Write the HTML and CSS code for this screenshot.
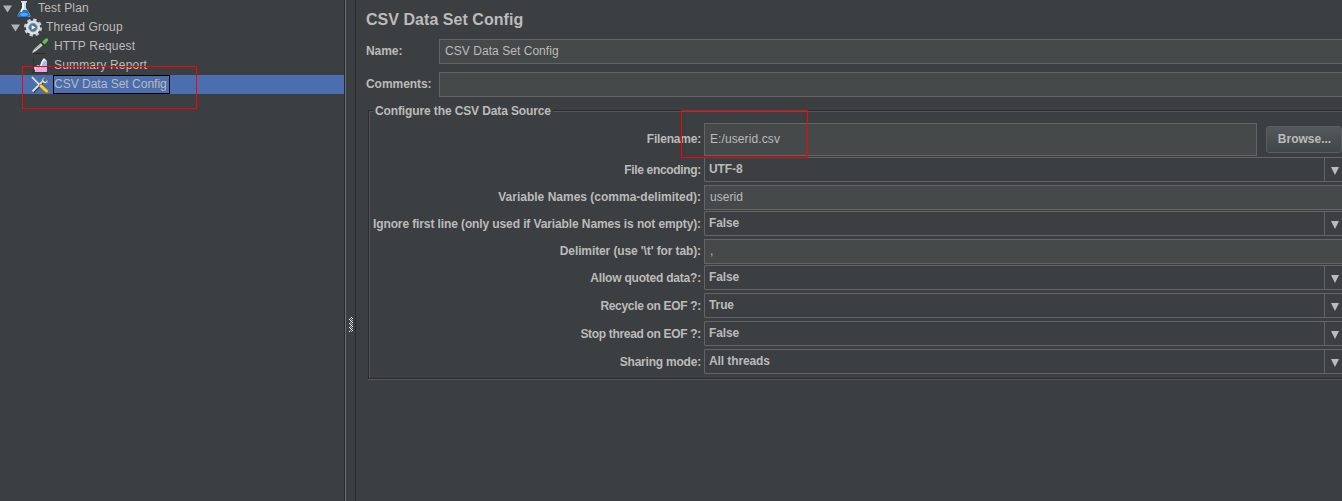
FILE: index.html
```html
<!DOCTYPE html>
<html lang="en">
<head>
<meta charset="utf-8">
<title>CSV Data Set Config</title>
<link rel="stylesheet" href="styles.css">
</head>
<body>
<div class="app">
  <nav class="tree">
    <div class="node level-0">
      <svg class="toggle" viewBox="0 0 10 8"><path d="M0 0H10L5 8Z" fill="#b0b2b3"/></svg>
      <svg class="icon" viewBox="0 0 20 19"><path d="M8 3V9L4 15.5Q3 18 5 18H15Q17 18 16 15.5L12 9V3Z" fill="#c6d9e8"/><path d="M7 2.8H13" stroke="#dce9f3" stroke-width="1.5"/><path d="M7 11H13L16 16Q16 18 14 18H5Q3 18 4 16Z" fill="#1a73d6"/><path d="M9 4V9L7 13" stroke="#fff" stroke-width="1.6" fill="none"/><ellipse cx="10" cy="15.5" rx="4" ry="1.7" fill="#4ba8f5"/></svg>
      <span class="label">Test Plan</span>
    </div>
    <div class="node level-1">
      <svg class="toggle" viewBox="0 0 10 8"><path d="M0 0H10L5 8Z" fill="#b0b2b3"/></svg>
      <svg class="icon" viewBox="0 0 20 19"><circle cx="10" cy="9.5" r="7.8" fill="none" stroke="#c9cfd5" stroke-width="2.4" stroke-dasharray="3.4 2.73"/><circle cx="10" cy="9.5" r="7.1" fill="#dfe3e6"/><circle cx="10" cy="9.5" r="4.2" fill="#4674a5" stroke="#8496a9"/><path d="M8.7 7.2L12.5 9.5L8.7 11.8Z" fill="#fff"/></svg>
      <span class="label">Thread Group</span>
    </div>
    <div class="node level-2">
      <svg class="icon" viewBox="0 0 20 19"><path d="M3 16.5H16" stroke="#292b2c"/><path d="M2 16L4 12.5L12 5L14 7L6 14Z" fill="#e9eeee" stroke="#899294" stroke-width=".6"/><path d="M5 13L11.5 7" stroke="#7d8586" stroke-width=".8"/><path d="M10.5 4.5L14.5 8.5" stroke="#1d3d1b" stroke-width="2"/><path d="M12 5L15 2Q17 .5 18 2Q19 3 17 5L14.5 7.5Z" fill="#69ba4b"/></svg>
      <span class="label">HTTP Request</span>
    </div>
    <div class="node level-2">
      <svg class="icon" viewBox="0 0 20 19"><path d="M3.5 2V17M2 16.5H18" fill="none" stroke="#303335"/><path d="M5 16V12L8 9.5L10 10L12 5L14 3L17 5V16Z" fill="#a9b9ec"/><path d="M5 16V13L8 10.5L10 12L13 10L17 14V16Z" fill="#f0a4df"/><path d="M5 13.5V11.5L8 10L10.5 11L12 6L14 3L16 5" fill="none" stroke="#fafaff" stroke-width="1.4"/></svg>
      <span class="label">Summary Report</span>
    </div>
    <div class="node level-2 selected">
      <svg class="icon" viewBox="0 0 20 19"><path d="M3 17L12.5 7.5" stroke="#222d39" stroke-width="3"/><path d="M2.5 16.5L12.5 6.5" stroke="#e2e3df" stroke-width="2"/><path d="M16.5 2L13.5 4L14 6L16 6.5L18 4Q18.5 8 15.5 8.5Q11.5 8.5 11.5 5.5Q12 2 16.5 2Z" fill="#dfe0dc" stroke="#49505b" stroke-width=".5"/><path d="M2 2L10.5 11" stroke="#e7e3d8" stroke-width="1.8"/><path d="M11 11L17 16.5" stroke="#9c7420" stroke-width="4.2" stroke-linecap="round"/><path d="M11 11L16.5 16" stroke="#f6cf3e" stroke-width="2.8" stroke-linecap="round"/></svg>
      <span class="label">CSV Data Set Config</span>
    </div>
  </nav>
  <div class="divider">
    <svg class="grip" viewBox="0 0 4 15" shape-rendering="crispEdges"><defs><pattern id="dots" width="4" height="4" patternUnits="userSpaceOnUse"><path d="M2 0h1v1h-1zM3 1h1v1h-1zM0 2h1v1h-1zM1 3h1v1h-1z" fill="#fff"/><path d="M1 1h1v1h-1zM2 2h1v1h-1zM3 3h1v1h-1z" fill="#a5a7a8"/></pattern></defs><rect width="4" height="15" fill="url(#dots)"/></svg>
  </div>
  <main class="panel">
    <h1 class="title">CSV Data Set Config</h1>
    <div class="property"><label class="name">Name:</label><div class="field">CSV Data Set Config</div></div>
    <div class="property"><label class="name">Comments:</label><div class="field"></div></div>
    <section class="group">
      <h2 class="legend">Configure the CSV Data Source</h2>
      <div class="row file"><label class="caption snug">Filename:</label><div class="field">E:/userid.csv</div><button class="browse">Browse...</button></div>
      <div class="row gap-1"><label class="caption tight low">File encoding:</label><div class="combo"><span class="value">UTF-8</span><span class="arrow"></span></div></div>
      <div class="row gap-3"><label class="caption">Variable Names (comma-delimited):</label><div class="field">userid</div></div>
      <div class="row gap-1"><label class="caption close low">Ignore first line (only used if Variable Names is not empty):</label><div class="combo"><span class="value">False</span><span class="arrow"></span></div></div>
      <div class="row gap-3"><label class="caption close">Delimiter (use '\t' for tab):</label><div class="field">,</div></div>
      <div class="row gap-1"><label class="caption snug low">Allow quoted data?:</label><div class="combo"><span class="value">False</span><span class="arrow"></span></div></div>
      <div class="row gap-3"><label class="caption tight low">Recycle on EOF ?:</label><div class="combo"><span class="value">True</span><span class="arrow"></span></div></div>
      <div class="row gap-3"><label class="caption tight low">Stop thread on EOF ?:</label><div class="combo"><span class="value">False</span><span class="arrow"></span></div></div>
      <div class="row gap-3"><label class="caption snug low">Sharing mode:</label><div class="combo"><span class="value">All threads</span><span class="arrow"></span></div></div>
    </section>
  </main>
  <div class="mark mark-tree"></div>
  <div class="mark mark-file"></div>
</div>
</body>
</html>
```
FILE: styles.css
```css
* { box-sizing: border-box; }
body { margin: 0; background: #3c3f41; color: #bbb; font: 12px/15px "Liberation Sans", Arial, sans-serif; overflow: hidden; }
.app { position: relative; display: flex; width: 1342px; height: 501px; overflow: hidden; }
.tree { width: 344px; margin-top: -1px; flex: none; }
.node { display: flex; align-items: center; height: 19px; }
.level-0 { padding-left: 3px; }
.level-1 { padding-left: 11px; }
.level-2 { padding-left: 30px; }
.toggle { width: 9px; height: 8px; margin-right: 3px; flex: none; }
.icon { width: 20px; height: 19px; margin-right: 3px; flex: none; }
.level-0 .toggle { margin-right: 2px; }
.level-1 .icon { margin-right: 2px; }
.label { height: 19px; line-height: 17px; padding: 1px; letter-spacing: .17px; white-space: nowrap; }
.selected { background: #4b6eaf; }
.selected .label { width: 117px; border: 1px solid #000; padding: 0; letter-spacing: 0; }
.divider { display: flex; align-items: center; width: 12px; padding: 148px 0 0 4px; border-left: 1px solid #282a2b; border-right: 1px solid #282a2b; box-shadow: inset 1px 0 #6a6d6f; flex: none; }
.grip { width: 4px; height: 15px; }
.panel { flex: 1; min-width: 0; padding: 10px 0 0 10px; }
.title { margin: 0 0 10px; font-size: 16px; line-height: 19px; font-weight: bold; letter-spacing: .04px; }
.property { display: flex; align-items: center; height: 25px; margin-bottom: 8px; }
.name { width: 73px; font-weight: bold; letter-spacing: -.05px; flex: none; }
.field { height: 25px; flex: 1; padding: 0 5px; line-height: 22px; border: 1px solid #646464; border-right: 0; background: #45494a; letter-spacing: .05px; }
.group { position: relative; height: 269px; margin: 13px 0 0 2px; padding: 12px 0 0 2px; border: 1px solid #282a2b; border-right: 0; box-shadow: inset 1px 1px #555759, 0 1px #555759; }
.legend { position: absolute; left: 4px; top: -7px; margin: 0; padding: 0 2px; background: #3c3f41; font-size: 12px; line-height: 14px; letter-spacing: -.12px; }
.row { display: flex; align-items: center; height: 25px; }
.gap-3 { margin-top: 3px; }
.gap-1 { margin-top: 1px; }
.caption { width: 330px; margin-right: 3px; text-align: right; font-weight: bold; white-space: nowrap; flex: none; }
.close { letter-spacing: -.11px; }
.snug { letter-spacing: -.21px; }
.tight { letter-spacing: -.32px; }
.low { padding-top: 2px; }
.file { height: 33px; }
.file .caption { padding-bottom: 1px; }
.file .field { flex: none; width: 553px; height: 33px; line-height: 31px; border-right: 1px solid #646464; letter-spacing: .1px; }
.browse { width: 76px; height: 27px; margin-left: 9px; padding: 0 0 1px 1px; border: 1px solid #5b5e60; border-radius: 3px; background: linear-gradient(#53585a, #414648); color: #bbb; font: bold 12px "Liberation Sans", Arial, sans-serif; }
.combo { display: flex; flex: 1; height: 25px; border: 1px solid #646464; border-right: 0; border-radius: 2px 0 0 2px; font-weight: bold; }
.value { flex: 1; padding-left: 4px; line-height: 23px; letter-spacing: -.1px; }
.arrow { width: 18px; border-left: 1px solid #646464; }
.arrow::before { content: ""; display: block; width: 8px; height: 8px; margin: 9px 0 0 6px; background: #bbb; clip-path: polygon(0 0, 100% 0, 50% 100%); }
.mark { position: absolute; border: 1px solid #f00; }
.mark-tree { left: 22px; top: 66px; width: 175px; height: 43px; }
.mark-file { left: 681px; top: 110px; width: 127px; height: 48px; }
```
